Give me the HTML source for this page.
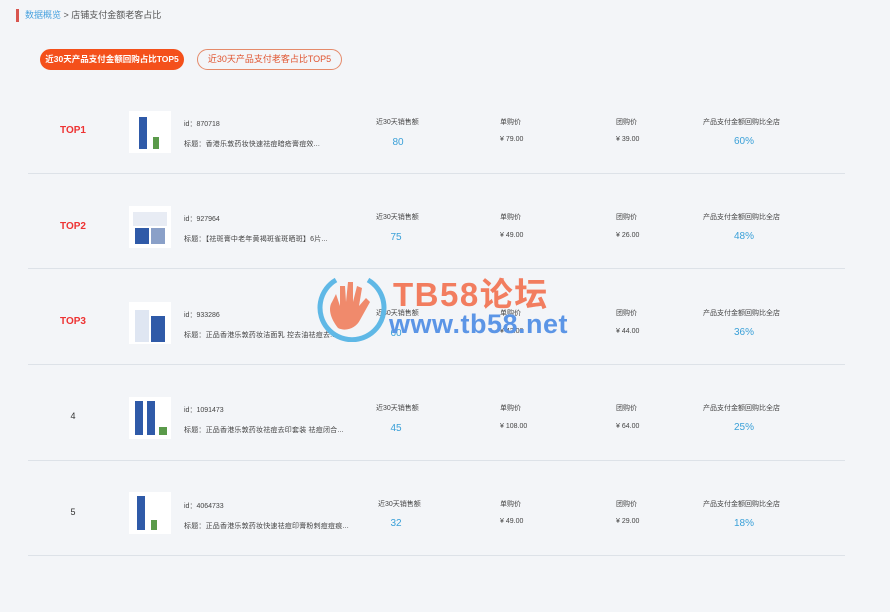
<!DOCTYPE html>
<html><head><meta charset="utf-8"><style>
*{margin:0;padding:0;box-sizing:border-box}
body{width:890px;height:612px;background:#f3f5f8;font-family:"Liberation Sans","Noto Sans CJK SC",sans-serif;position:relative;overflow:hidden;color:#333}
.a{position:absolute;white-space:nowrap}
.bc{left:16px;top:9px;font-size:9px;color:#555;border-left:3px solid #d8554f;padding-left:6px;height:13px;line-height:13px}
.bc span{color:#4aa3df}
.btn{top:49px;height:21px;border-radius:11px;font-size:9px;line-height:19px;text-align:center}
.b1{left:40px;width:144px;background:#f4501b;color:#fff;font-weight:bold;border:1px solid #f4501b;font-size:8.5px}
.b2{left:197px;width:145px;border:1px solid #e58a6a;color:#e0532e}
.rk{width:90px;left:28px;text-align:center;font-size:10px}
.red{color:#e33;font-weight:bold}
.img{left:129px;width:42px;height:42px;background:#fff}
.img i{position:absolute;background:#2f5aa8}
.s{font-size:7px;color:#444}
.t{font-size:7px;color:#444;letter-spacing:0.2px}
.v{font-size:10px;color:#3aa0d8;text-align:center}
.hr{left:28px;width:817px;height:1px;background:#dde2e8}
</style></head><body>
<div class="a bc"><span>数据概览</span> &gt; 店铺支付金额老客占比</div>
<div class="a btn b1">近30天产品支付金额回购占比TOP5</div>
<div class="a btn b2">近30天产品支付老客占比TOP5</div>

<div class="a rk red" style="top:125px">TOP1</div>
<div class="a img" style="top:111px"><i style="left:10px;top:6px;width:8px;height:32px"></i><i style="left:24px;top:26px;width:6px;height:12px;background:#5a9a4a"></i></div>
<div class="a s" style="left:184px;top:119px">id：870718</div>
<div class="a t" style="left:184px;top:139px">标题：香港乐敦药妆快速祛痘暗疮膏痘效...</div>
<div class="a s" style="left:376px;top:117px">近30天销售额</div>
<div class="a v" style="left:378px;width:40px;top:137px">80</div>
<div class="a s" style="left:500px;top:117px">单购价</div>
<div class="a s" style="left:500px;top:136px">¥ 79.00</div>
<div class="a s" style="left:616px;top:117px">团购价</div>
<div class="a s" style="left:616px;top:136px">¥ 39.00</div>
<div class="a s" style="left:703px;top:117px">产品支付金额回购比全店</div>
<div class="a v" style="left:724px;width:40px;top:136px">60%</div>
<div class="a hr" style="top:173px"></div>

<div class="a rk red" style="top:221px">TOP2</div>
<div class="a img" style="top:206px"><i style="left:4px;top:6px;width:34px;height:14px;background:#e8ecf4"></i><i style="left:6px;top:22px;width:14px;height:16px"></i><i style="left:22px;top:22px;width:14px;height:16px;background:#8aa0c8"></i></div>
<div class="a s" style="left:184px;top:214px">id：927964</div>
<div class="a t" style="left:184px;top:234px">标题：【祛斑膏中老年黄褐斑雀斑晒斑】6片...</div>
<div class="a s" style="left:376px;top:212px">近30天销售额</div>
<div class="a v" style="left:376px;width:40px;top:232px">75</div>
<div class="a s" style="left:500px;top:212px">单购价</div>
<div class="a s" style="left:500px;top:232px">¥ 49.00</div>
<div class="a s" style="left:616px;top:212px">团购价</div>
<div class="a s" style="left:616px;top:232px">¥ 26.00</div>
<div class="a s" style="left:703px;top:212px">产品支付金额回购比全店</div>
<div class="a v" style="left:724px;width:40px;top:231px">48%</div>
<div class="a hr" style="top:268px"></div>

<div class="a rk red" style="top:316px">TOP3</div>
<div class="a img" style="top:302px"><i style="left:6px;top:8px;width:14px;height:32px;background:#dfe6f2"></i><i style="left:22px;top:14px;width:14px;height:26px"></i></div>
<div class="a s" style="left:184px;top:310px">id：933286</div>
<div class="a t" style="left:184px;top:330px">标题：正品香港乐敦药妆洁面乳 控去油祛痘去...</div>
<div class="a s" style="left:376px;top:308px">近30天销售额</div>
<div class="a v" style="left:376px;width:40px;top:328px">60</div>
<div class="a s" style="left:500px;top:308px">单购价</div>
<div class="a s" style="left:500px;top:328px">¥ 42.00</div>
<div class="a s" style="left:616px;top:308px">团购价</div>
<div class="a s" style="left:616px;top:328px">¥ 44.00</div>
<div class="a s" style="left:703px;top:308px">产品支付金额回购比全店</div>
<div class="a v" style="left:724px;width:40px;top:327px">36%</div>
<div class="a hr" style="top:364px"></div>

<div class="a rk" style="top:411px;font-size:9px">4</div>
<div class="a img" style="top:397px"><i style="left:6px;top:4px;width:8px;height:34px"></i><i style="left:18px;top:4px;width:8px;height:34px"></i><i style="left:30px;top:30px;width:8px;height:8px;background:#5a9a4a"></i></div>
<div class="a s" style="left:184px;top:405px">id：1091473</div>
<div class="a t" style="left:184px;top:425px">标题：正品香港乐敦药妆祛痘去印套装 祛痘闭合...</div>
<div class="a s" style="left:376px;top:403px">近30天销售额</div>
<div class="a v" style="left:376px;width:40px;top:423px">45</div>
<div class="a s" style="left:500px;top:403px">单购价</div>
<div class="a s" style="left:500px;top:423px">¥ 108.00</div>
<div class="a s" style="left:616px;top:403px">团购价</div>
<div class="a s" style="left:616px;top:423px">¥ 64.00</div>
<div class="a s" style="left:703px;top:403px">产品支付金额回购比全店</div>
<div class="a v" style="left:724px;width:40px;top:422px">25%</div>
<div class="a hr" style="top:460px"></div>

<div class="a rk" style="top:507px;font-size:9px">5</div>
<div class="a img" style="top:492px"><i style="left:8px;top:4px;width:8px;height:34px"></i><i style="left:22px;top:28px;width:6px;height:10px;background:#5a9a4a"></i></div>
<div class="a s" style="left:184px;top:501px">id：4064733</div>
<div class="a t" style="left:184px;top:521px">标题：正品香港乐敦药妆快速祛痘印膏粉刺痘痘痕...</div>
<div class="a s" style="left:378px;top:499px">近30天销售额</div>
<div class="a v" style="left:376px;width:40px;top:518px">32</div>
<div class="a s" style="left:500px;top:499px">单购价</div>
<div class="a s" style="left:500px;top:518px">¥ 49.00</div>
<div class="a s" style="left:616px;top:499px">团购价</div>
<div class="a s" style="left:616px;top:518px">¥ 29.00</div>
<div class="a s" style="left:703px;top:499px">产品支付金额回购比全店</div>
<div class="a v" style="left:724px;width:40px;top:518px">18%</div>
<div class="a hr" style="top:555px"></div>

<svg class="a" style="left:316px;top:272px" width="72" height="70" viewBox="0 0 72 70">
<path d="M52 8 A32 32 0 1 1 20 8" fill="none" stroke="#5fb8e6" stroke-width="5"/>
<path d="M22 56 C14 46 12 36 16 30 L20 22 L24 34 L24 14 L29 14 L30 30 L32 10 L37 10 L37 30 L41 14 L46 16 L43 34 L50 26 L54 30 L44 48 C40 56 30 60 22 56Z" fill="#f08a6c"/>
</svg>
<div class="a" style="left:393px;top:268px;font-size:33px;font-weight:bold;color:#f27d5f;letter-spacing:1.5px">TB58论坛</div>
<div class="a" style="left:389px;top:309px;font-size:27px;font-weight:bold;color:#5b95e6;letter-spacing:0.5px">www.tb58.net</div>
</body></html>
